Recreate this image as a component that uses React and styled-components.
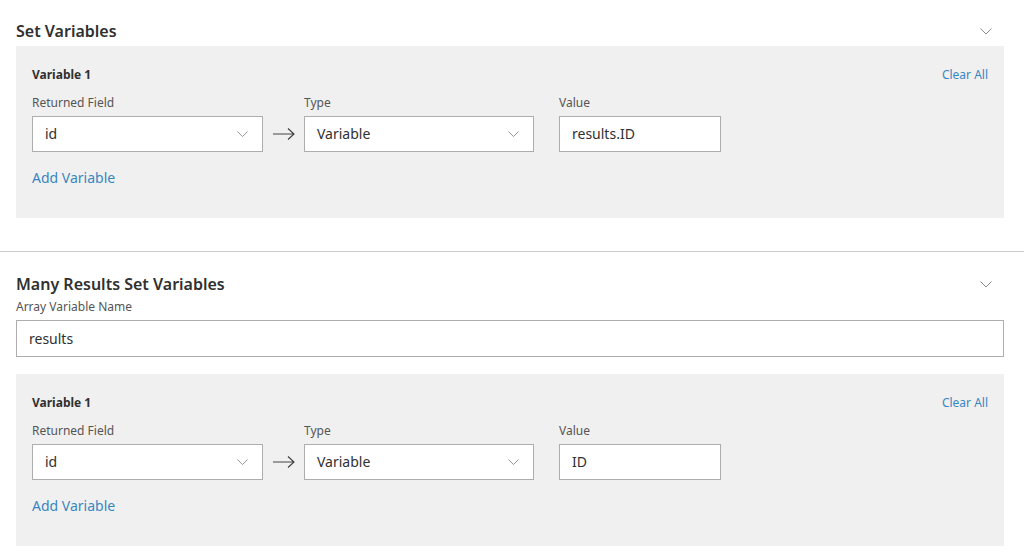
import React from "react";
import styled, { createGlobalStyle } from "styled-components";

const GlobalStyle = createGlobalStyle`
  html, body {
    margin: 0;
    padding: 0;
    background: #ffffff;
    font-family: "Noto Sans", "Open Sans", sans-serif;
    color: #303030;
  }
`;

// Section
const Section = styled.section`
  padding: ${(props) => props.top || "20px"} 20px ${(props) => props.bottom || "0"} 16px;
`;

const Header = styled.div`
  display: flex;
  justify-content: space-between;
  align-items: center;
  height: 22px;
`;

const Title = styled.h2`
  margin: 0;
  font-size: 16px;
  line-height: 22px;
  font-weight: 600;
  color: #303030;
`;

const Toggle = styled.span`
  display: flex;
  margin-right: 12px;
  color: #8a8a8a;
`;

const Divider = styled.hr`
  margin: 0;
  border: none;
  border-top: 1px solid #cccccc;
`;

// Panel
const Panel = styled.div`
  margin-top: ${(props) => props.gap || "4px"};
  background: #f0f0f0;
  padding: 21px 16px 30px 16px;
`;

const PanelHead = styled.div`
  display: flex;
  justify-content: space-between;
  align-items: center;
  height: 16px;
`;

const PanelTitle = styled.span`
  font-size: 12px;
  line-height: 16px;
  font-weight: 700;
  color: #303030;
`;

const LinkButton = styled.a`
  font-size: ${(props) => props.size || "12px"};
  line-height: ${(props) => (props.size === "14px" ? "20px" : "16px")};
  color: #3a86c0;
  cursor: pointer;
  text-decoration: none;
`;

const FieldRow = styled.div`
  display: flex;
  align-items: flex-end;
  margin-top: 12px;
`;

const Field = styled.label`
  display: flex;
  flex-direction: column;
  width: ${(props) => props.width};
`;

const Label = styled.span`
  font-size: 12px;
  line-height: 16px;
  color: #555555;
  margin-bottom: 5px;
`;

const SelectBox = styled.div`
  display: flex;
  justify-content: space-between;
  align-items: center;
  box-sizing: border-box;
  height: 36px;
  padding: 0 14px 0 12px;
  background: #ffffff;
  border: 1px solid #adadad;
  font-size: 14px;
  line-height: 20px;
  color: #303030;
`;

const TextBox = styled.div`
  display: flex;
  align-items: center;
  box-sizing: border-box;
  height: ${(props) => props.height || "36px"};
  padding: 0 12px;
  background: #ffffff;
  border: 1px solid #adadad;
  font-size: 14px;
  line-height: 20px;
  color: #303030;
`;

const Arrow = styled.span`
  display: flex;
  align-items: center;
  justify-content: center;
  width: 41px;
  height: 36px;
  color: #444444;
`;

const Caret = styled.span`
  display: flex;
  color: #8a8a8a;
`;

const Spacer = styled.span`
  width: 25px;
`;

const AddRow = styled.div`
  display: flex;
  margin-top: 16px;
`;

const Chevron = ({ size = 12 }) => (
  <svg width={size} height={size / 2 + 1} viewBox="0 0 12 7" fill="none">
    <path d="M0.5 0.5 L6 6 L11.5 0.5" stroke="currentColor" strokeWidth="1" />
  </svg>
);

const Select = ({ value }) => (
  <SelectBox>
    <span>{value}</span>
    <Caret>
      <Chevron size={11} />
    </Caret>
  </SelectBox>
);

const VariableBlock = ({ value, gap }) => (
  <Panel gap={gap}>
    <PanelHead>
      <PanelTitle>Variable 1</PanelTitle>
      <LinkButton>Clear All</LinkButton>
    </PanelHead>
    <FieldRow>
      <Field width="231px">
        <Label>Returned Field</Label>
        <Select value="id" />
      </Field>
      <Arrow>
        <svg width="22" height="12" viewBox="0 0 22 12" fill="none">
          <path d="M0 6 H21 M15 0.5 L21 6 L15 11.5" stroke="currentColor" strokeWidth="1.2" />
        </svg>
      </Arrow>
      <Field width="230px">
        <Label>Type</Label>
        <Select value="Variable" />
      </Field>
      <Spacer />
      <Field width="162px">
        <Label>Value</Label>
        <TextBox>{value}</TextBox>
      </Field>
    </FieldRow>
    <AddRow>
      <LinkButton size="14px">Add Variable</LinkButton>
    </AddRow>
  </Panel>
);

const ArrayLabel = styled(Label)`
  margin-top: 4px;
`;

const App = () => {
  return (
    <>
      <GlobalStyle />
      <Section top="20px" bottom="33px">
        <Header>
          <Title>Set Variables</Title>
          <Toggle>
            <Chevron />
          </Toggle>
        </Header>
        <VariableBlock value="results.ID" />
      </Section>
      <Divider />
      <Section top="21px">
        <Header>
          <Title>Many Results Set Variables</Title>
          <Toggle>
            <Chevron />
          </Toggle>
        </Header>
        <Field>
          <ArrayLabel>Array Variable Name</ArrayLabel>
          <TextBox height="37px">results</TextBox>
        </Field>
        <VariableBlock value="ID" gap="17px" />
      </Section>
    </>
  );
};

export default App;
